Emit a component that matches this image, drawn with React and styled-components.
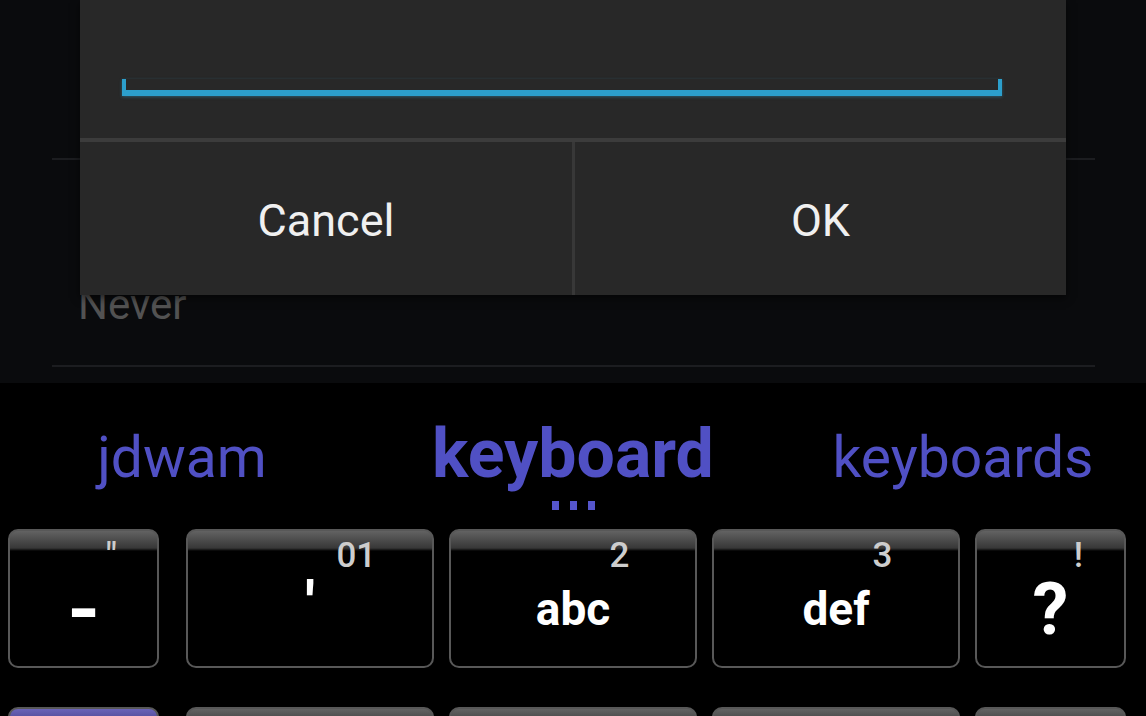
import React from 'react';
import styled, { createGlobalStyle } from 'styled-components';

const GlobalStyle = createGlobalStyle`
	html, body {
		margin: 0;
		padding: 0;
		background: #000;
	}
	body {
		font-family: Roboto, 'Noto Sans', sans-serif;
	}
`;

const suggestions = [
	{ word: 'jdwam', size: 57, weight: 400, shift: -9 },
	{ word: 'keyboard', size: 68, weight: 700, shift: 0, current: true },
	{ word: 'keyboards', size: 57, weight: 400, shift: 8 },
];

const topRow = [
	{ label: '-', hint: '"', width: 151, size: 60, drop: 50, dash: true, wide: true },
	{ label: "'", hint: '01', width: 248, size: 62, drop: 42 },
	{ label: 'abc', hint: '2', width: 248, size: 46, drop: 55 },
	{ label: 'def', hint: '3', width: 248, size: 46, drop: 55 },
	{ label: '?', hint: '!', width: 151, size: 72, drop: 43 },
];

const bottomRow = [
	{ width: 151, accent: true, wide: true },
	{ width: 248 },
	{ width: 248 },
	{ width: 248 },
	{ width: 151 },
];

const App = () => {
	return (
		<>
			<GlobalStyle />
			<Screen>
				<Settings>
					<List>
						<ListRow $height={158} />
						<ListRow $height={205}>
							<Summary>Never</Summary>
						</ListRow>
					</List>
					<Dialog>
						<DialogBody>
							<Field />
						</DialogBody>
						<DialogDivider />
						<DialogButtons>
							<DialogButton $divider>Cancel</DialogButton>
							<DialogButton>OK</DialogButton>
						</DialogButtons>
					</Dialog>
				</Settings>
				<Keyboard>
					<Strip>
						{suggestions.map((s) => (
							<SuggestionCell key={s.word}>
								<Suggestion $size={s.size} $weight={s.weight} $shift={s.shift}>
									{s.word}
								</Suggestion>
								{s.current && (
									<Dots>
										<Dot />
										<Dot />
										<Dot />
									</Dots>
								)}
							</SuggestionCell>
						))}
					</Strip>
					<Rows>
						<KeyRow>
							{topRow.map((k) => (
								<Key key={k.hint} $width={k.width} $wide={k.wide}>
									<Hint>{k.hint}</Hint>
									<MainLabel $size={k.size} $drop={k.drop} $dash={k.dash}>
										{k.label}
									</MainLabel>
								</Key>
							))}
						</KeyRow>
						<KeyRow>
							{bottomRow.map((k, i) => (
								<Key key={i} $width={k.width} $wide={k.wide} $accent={k.accent} />
							))}
						</KeyRow>
					</Rows>
				</Keyboard>
			</Screen>
		</>
	);
};

const Screen = styled.div`
	width: 1146px;
	height: 716px;
	overflow: hidden;
	display: flex;
	flex-direction: column;
	background: #000;
`;
const Settings = styled.div`
	position: relative;
	flex-shrink: 0;
	height: 383px;
	background: #0a0b0d;
`;
const List = styled.div`
	padding: 0 51px 0 52px;
`;
const ListRow = styled.div`
	height: ${(p) => p.$height}px;
	border-bottom: 2px solid #1c1d20;
`;
const Summary = styled.div`
	padding: 124px 0 0 26px;
	font-size: 42px;
	line-height: 1;
	color: #525252;
`;
const Dialog = styled.div`
	position: absolute;
	top: 0;
	left: 80px;
	width: 986px;
	height: 295px;
	display: flex;
	flex-direction: column;
	background: #282828;
	box-shadow: 0 3px 8px rgba(0, 0, 0, 0.6);
`;
const DialogBody = styled.div`
	height: 138px;
	box-sizing: border-box;
	padding: 79px 0 0 42px;
`;
const Field = styled.div`
	width: 880px;
	height: 17px;
	box-sizing: border-box;
	border: solid #2c9fcc;
	border-width: 0 4px 6px 4px;
	box-shadow: 0 1px 3px rgba(51, 181, 229, 0.35);
`;
const DialogDivider = styled.div`
	height: 4px;
	background: #3c3c3c;
`;
const DialogButtons = styled.div`
	flex: 1;
	display: flex;
`;
const DialogButton = styled.div`
	flex: ${(p) => (p.$divider ? '0 0 495px' : '1')};
	box-sizing: border-box;
	display: flex;
	align-items: center;
	justify-content: center;
	padding-top: 4px;
	border-right: ${(p) => (p.$divider ? '3px solid #383838' : 'none')};
	font-size: 45px;
	color: #f0f0f0;
`;
const Keyboard = styled.div`
	flex: 1;
	background: #000;
`;
const Strip = styled.div`
	height: 146px;
	box-sizing: border-box;
	padding-top: 37px;
	display: grid;
	grid-template-columns: 1fr 1fr 1fr;
	align-items: baseline;
`;
const SuggestionCell = styled.div`
	display: flex;
	flex-direction: column;
	align-items: center;
`;
const Suggestion = styled.span`
	font-size: ${(p) => p.$size}px;
	font-weight: ${(p) => p.$weight};
	line-height: 1;
	color: #5050c4;
	transform: translateX(${(p) => p.$shift}px);
`;
const Dots = styled.div`
	display: flex;
	gap: 11px;
	margin-top: 13px;
`;
const Dot = styled.span`
	width: 7px;
	height: 9px;
	background: #5656cc;
`;
const Rows = styled.div`
	display: flex;
	flex-direction: column;
	gap: 39px;
`;
const KeyRow = styled.div`
	display: flex;
	gap: 15px;
	padding-left: 8px;
`;
const Key = styled.div`
	position: relative;
	flex-shrink: 0;
	width: ${(p) => p.$width}px;
	height: 139px;
	margin-right: ${(p) => (p.$wide ? 12 : 0)}px;
	box-sizing: border-box;
	display: flex;
	justify-content: center;
	border: 2px solid #585858;
	border-radius: 10px;
	background: ${(p) =>
		p.$accent
			? 'linear-gradient(to bottom, #6a63b8 0px, #433d86 17px, #15132a 19px, #000 20px)'
			: 'linear-gradient(to bottom, #626262 0px, #383838 17px, #141414 19px, #000 20px)'};
`;
const Hint = styled.span`
	position: absolute;
	top: 7px;
	left: 69%;
	transform: translateX(-50%);
	font-size: 35px;
	font-weight: 500;
	line-height: 1;
	color: #cdcdcd;
`;
const MainLabel = styled.span`
	margin-top: ${(p) => p.$drop}px;
	height: ${(p) => p.$size}px;
	font-size: ${(p) => p.$size}px;
	font-weight: 700;
	line-height: 1;
	color: #fff;
	transform: ${(p) => (p.$dash ? 'scale(1.4, 1.3)' : 'none')};
`;

export default App;
